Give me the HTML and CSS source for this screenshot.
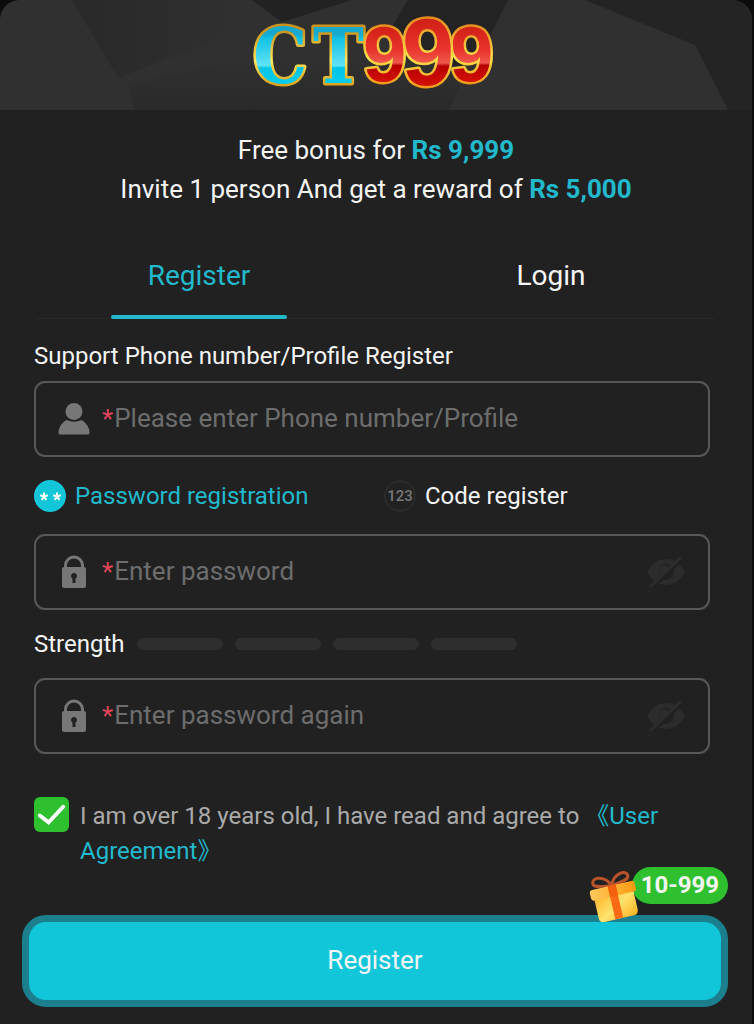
FILE: index.html
```
<!DOCTYPE html>
<html lang="en">
  <head>
    <meta charset="UTF-8">
    <meta name="viewport" content="width=device-width, initial-scale=1">
    <title>CT999 - Register</title>
    <link rel="stylesheet" href="styles.css">
  </head>
  <body>
    <!-- shared icons -->
    <svg class="sprite" aria-hidden="true">
      <symbol id="icon-user" viewBox="0 0 32 34">
        <circle cx="16" cy="9.500" r="8.500" />
        <path d="M0.500 31C0.500 25 4 20.500 8.500 18Q16 21.500 23.500 18C28 20.500 31.500 25 31.500 31Q31.500 32.500 30 32.500H2Q0.500 32.500 0.500 31Z" />
      </symbol>
      <symbol id="icon-lock" viewBox="0 0 32 34">
        <path d="M7.500 15V10.500a8.500 8.500 0 0 1 17 0V15" fill="none" stroke="currentColor" stroke-width="3" />
        <path fill-rule="evenodd" d="M6 12H26Q28 12 28 14V31Q28 33 26 33H6Q4 33 4 31V14Q4 12 6 12ZM16 18a3 3 0 0 0-1.500 5.600V28h3v-4.400A3 3 0 0 0 16 18Z" />
      </symbol>
      <symbol id="icon-eye" viewBox="0 0 40 32">
        <path fill-rule="evenodd" d="M1 16Q8 3 20 3T39 16Q32 29 20 29T1 16ZM20 8a8 8 0 1 0 0 16a8 8 0 1 0 0-16Z" />
        <path d="M14 20a6 6 0 0 1 9-9Z" />
        <path d="M4 31L35 1" fill="none" stroke="currentColor" stroke-width="3" />
        <path d="M7 32L37 3" fill="none" stroke="#212121" stroke-width="2" />
      </symbol>
    </svg>

    <main class="card">
      <header class="banner">
        <svg class="banner-bg" viewBox="0 0 752 110" preserveAspectRatio="none" aria-hidden="true">
          <defs>
            <linearGradient id="shade" x1="0" y1="0" x2="1" y2="0">
              <stop offset="0" stop-color="#292929" />
              <stop offset="1" stop-color="#303030" />
            </linearGradient>
            <linearGradient id="floor" x1="0" y1="1" x2="0" y2="0">
              <stop offset="0" stop-color="#2a2a2a" />
              <stop offset="1" stop-color="#303030" />
            </linearGradient>
          </defs>
          <path fill="url(#floor)" d="M134 110L128 85L240 60H470L450 110Z" />
          <path fill="url(#shade)" d="M72 0L118 78L215 40L240 0Z" />
          <path fill="#222" d="M252 0H352L282 22Z" />
          <path fill="#232323" d="M408 0H508L490 36L460 70L390 30Z" />
          <path fill="#242424" d="M585 0H752V110H728L695 45Z" />
        </svg>
        <svg class="logo" viewBox="0 0 246 80" role="img" aria-label="CT999">
          <defs>
            <linearGradient id="blue" x1="0" y1="0" x2="0" y2="1">
              <stop offset="0.25" stop-color="#16a9cf" />
              <stop offset="0.3" stop-color="#12c2e4" />
              <stop offset="0.6" stop-color="#5fe2f7" />
              <stop offset="0.63" stop-color="#00c4e6" />
              <stop offset="0.85" stop-color="#0cd0ec" />
            </linearGradient>
            <linearGradient id="red" x1="0" y1="0" x2="0" y2="1">
              <stop offset="0.1" stop-color="#c81a10" />
              <stop offset="0.45" stop-color="#e8322a" />
              <stop offset="0.6" stop-color="#f0574c" />
              <stop offset="0.63" stop-color="#b80000" />
              <stop offset="0.85" stop-color="#d81408" />
            </linearGradient>
            <linearGradient id="gold" x1="0" y1="0" x2="0" y2="1">
              <stop offset="0.2" stop-color="#c8921c" />
              <stop offset="0.55" stop-color="#ffe65a" />
              <stop offset="0.85" stop-color="#d89a18" />
            </linearGradient>
            <linearGradient id="orange" x1="0" y1="0" x2="0" y2="1">
              <stop offset="0.1" stop-color="#e07c18" />
              <stop offset="0.55" stop-color="#ffe04a" />
              <stop offset="0.9" stop-color="#f08a10" />
            </linearGradient>
          </defs>
          <g class="logo-letters">
            <text x="0" y="71">C</text>
            <text x="60" y="71">T</text>
          </g>
          <g class="logo-digits">
            <text x="110" y="69">9</text>
            <text x="197" y="69">9</text>
            <text class="big" x="149" y="73">9</text>
          </g>
        </svg>
      </header>

      <section class="promo">
        <p>Free bonus for <strong>Rs 9,999</strong></p>
        <p>Invite 1 person And get a reward of <strong>Rs 5,000</strong></p>
      </section>

      <nav class="tabs">
        <button type="button" class="tab active">Register</button>
        <button type="button" class="tab">Login</button>
      </nav>

      <form class="form">
        <label class="title" for="account">Support Phone number/Profile Register</label>
        <div class="field">
          <svg class="icon"><use href="#icon-user" /></svg>
          <span class="star">*</span>
          <input id="account" type="text" placeholder="Please enter Phone number/Profile">
        </div>

        <div class="modes">
          <button type="button" class="mode active">
            <svg class="mode-icon" viewBox="0 0 32 32" aria-hidden="true">
              <circle cx="16" cy="16" r="16" fill="#12c6da" />
              <path d="M10 16.500V12.500M10 16.500L6.200 15.300M10 16.500L13.800 15.300M10 16.500L7.600 19.800M10 16.500L12.400 19.800M23 16.500V12.500M23 16.500L19.200 15.300M23 16.500L26.800 15.300M23 16.500L20.600 19.800M23 16.500L25.400 19.800" stroke="#fff" stroke-width="2" />
            </svg>
            Password registration
          </button>
          <button type="button" class="mode">
            <span class="mode-icon code">123</span>
            Code register
          </button>
        </div>

        <div class="field">
          <svg class="icon"><use href="#icon-lock" /></svg>
          <span class="star">*</span>
          <input type="password" placeholder="Enter password" aria-label="Enter password">
          <button type="button" class="eye" aria-label="Show password"><svg><use href="#icon-eye" /></svg></button>
        </div>

        <div class="strength">
          <span>Strength</span>
          <i></i><i></i><i></i><i></i>
        </div>

        <div class="field">
          <svg class="icon"><use href="#icon-lock" /></svg>
          <span class="star">*</span>
          <input type="password" placeholder="Enter password again" aria-label="Enter password again">
          <button type="button" class="eye" aria-label="Show password"><svg><use href="#icon-eye" /></svg></button>
        </div>

        <div class="agree">
          <span class="check">
            <input id="agree" type="checkbox" checked>
            <svg viewBox="0 0 36 36" aria-hidden="true"><path d="M6 19L15 26L30 10" /></svg>
          </span>
          <p><label for="agree">I am over 18 years old, I have read and agree to</label> <a href="#">《User Agreement》</a></p>
        </div>

        <div class="submit-wrap">
          <button type="submit" class="submit">Register</button>
          <div class="bonus">
            <svg class="gift" viewBox="0 0 52 54" aria-hidden="true">
              <defs>
                <linearGradient id="box" x1="0" y1="0" x2="1" y2="1">
                  <stop offset="0" stop-color="#ffb52a" />
                  <stop offset="0.5" stop-color="#ffe36e" />
                  <stop offset="1" stop-color="#ffb01e" />
                </linearGradient>
                <linearGradient id="lid" x1="0" y1="0" x2="1" y2="0">
                  <stop offset="0" stop-color="#ffc95a" />
                  <stop offset="1" stop-color="#ff9a12" />
                </linearGradient>
              </defs>
              <g transform="rotate(-13 26 30)">
                <path d="M26 15C21 3 8 3 8 9C8 14 18 14 26 15C34 14 44 14 44 9C44 3 31 3 26 15Z" fill="none" stroke="#b9532c" stroke-width="3" />
                <path d="M6 24H46V44Q46 49 41 49H11Q6 49 6 44Z" fill="url(#box)" />
                <rect x="3" y="15" width="46" height="11" rx="3" fill="url(#lid)" />
                <path d="M22 15H30V49H22Z" fill="#ff6a14" />
                <path d="M22 15H30V26H22Z" fill="#f2600e" />
              </g>
            </svg>
            <span class="bonus-text">10-999</span>
          </div>
        </div>
      </form>
    </main>

    <script>
      // switch the active tab / mode
      document.querySelectorAll(".tabs, .modes").forEach(function (group) {
        group.addEventListener("click", function (e) {
          let button = e.target.closest("button");
          if (!button) return;
          group.querySelector(".active").classList.remove("active");
          button.classList.add("active");
        });
      });

      // show or hide the password
      document.querySelectorAll(".eye").forEach(function (eye) {
        eye.addEventListener("click", function () {
          let input = eye.parentElement.querySelector("input");
          input.type = input.type === "password" ? "text" : "password";
        });
      });
    </script>
  </body>
</html>
```
FILE: styles.css
```
* {
  box-sizing: border-box;
}

body {
  margin: 0;
  background-color: #0c0c0c;
  color: #f5f5f5;
  font-family: Roboto, "Noto Sans CJK SC", sans-serif;
  font-size: 24px;
}

p {
  margin: 0;
}

button,
input {
  font: inherit;
  color: inherit;
  padding: 0;
  border: none;
  background: none;
}

button {
  cursor: pointer;
}

.sprite {
  display: none;
}

.card {
  min-height: 100vh;
  margin-right: 2px;
  background-color: #212121;
  border-radius: 20px 20px 0 0;
  overflow: hidden;
}

/* header with the logo */
.banner {
  position: relative;
  height: 110px;
  padding-top: 12px;
  background-color: #303030;
  text-align: center;
}

.banner-bg {
  position: absolute;
  top: 0;
  left: 0;
  width: 100%;
  height: 100%;
}

.logo {
  position: relative;
  width: 246px;
  height: 80px;
  overflow: visible;
}

.logo text {
  stroke-width: 5px;
  stroke-linejoin: round;
  paint-order: stroke;
  font-weight: bold;
}

.logo-letters text {
  fill: url(#blue);
  stroke: url(#gold);
  font-family: "DejaVu Serif Condensed", "DejaVu Serif", serif;
  font-size: 76px;
}

.logo-digits text {
  fill: url(#red);
  stroke: url(#orange);
  font-family: "Liberation Sans", sans-serif;
  font-size: 78px;
}

.logo-digits .big {
  font-size: 94px;
}

.promo {
  padding-top: 21px;
  font-size: 26px;
  line-height: 39px;
  text-align: center;
}

.promo strong {
  color: #22b9cc;
}

/* tabs */
.tabs {
  display: flex;
  margin: 31px 25px 0 23px;
  background: linear-gradient(#282828, #282828) 12px 78px / calc(100% - 24px) 1px no-repeat;
}

.tab {
  position: relative;
  flex: 1;
  height: 80px;
  padding-bottom: 10px;
  font-size: 28px;
}

.tab.active {
  color: #22b9cc;
}

.tab.active::after {
  content: "";
  position: absolute;
  bottom: 1px;
  left: 25%;
  width: 50%;
  height: 4px;
  border-radius: 2px;
  background-color: #22b9cc;
}

/* form */
.form {
  padding: 20px 42px 16px 34px;
}

.title {
  display: block;
  line-height: 32px;
}

.field {
  display: flex;
  align-items: center;
  height: 76px;
  padding: 0 22px;
  border: 2px solid #585858;
  border-radius: 11px;
  font-size: 26px;
}

.title + .field {
  margin-top: 9px;
}

.icon {
  width: 32px;
  height: 34px;
  margin-right: 12px;
  fill: #777;
  color: #777;
}

.star {
  margin-right: 1px;
  color: #e0455a;
}

.field input {
  flex: 1;
  min-width: 0;
  padding-bottom: 2px;
  outline: none;
}

.field input::placeholder {
  color: #6d6d6d;
  opacity: 1;
}

.eye {
  height: 32px;
  color: #2c2c2c;
  fill: #2c2c2c;
}

.eye svg {
  display: block;
  width: 40px;
  height: 32px;
}

.modes {
  display: flex;
  align-items: center;
  height: 77px;
}

.mode {
  display: flex;
  flex: none;
  align-items: center;
  gap: 9px;
  white-space: nowrap;
}

.mode:first-child {
  width: 350px;
}

.mode.active {
  color: #22b9cc;
}

.mode-icon {
  width: 32px;
  height: 32px;
}

.code {
  border: 2px solid #2b2b2b;
  border-radius: 50%;
  color: #777;
  font-size: 15px;
  font-weight: 500;
  line-height: 28px;
}

.strength {
  display: flex;
  align-items: center;
  gap: 12px;
  height: 68px;
}

.strength i {
  width: 86px;
  height: 12px;
  border-radius: 6px;
  background-color: #2e2e2e;
}

.agree {
  display: flex;
  gap: 11px;
  margin-top: 43px;
  color: #aaa;
  line-height: 35px;
}

.agree p {
  padding-top: 2px;
}

.agree a {
  color: #22b9cc;
  text-decoration: none;
}

.check {
  position: relative;
  flex: none;
  width: 35px;
  height: 35px;
}

.check input {
  appearance: none;
  display: block;
  width: 35px;
  height: 35px;
  margin: 0;
  border-radius: 6px;
  background-color: #444;
}

.check input:checked {
  background-color: #2fc02f;
}

.check svg {
  position: absolute;
  inset: 0;
  fill: none;
  stroke: #fff;
  stroke-width: 4;
  stroke-linecap: round;
  pointer-events: none;
}

.check input:not(:checked) + svg {
  display: none;
}

/* submit button */
.submit-wrap {
  position: relative;
  margin: 46px -18px 0 -12px;
}

.submit {
  width: 100%;
  height: 92px;
  padding-bottom: 2px;
  border: 7px solid #1b7f8d;
  border-radius: 24px;
  background-color: #12c6da;
  font-size: 26px;
}

/* bonus badge over the corner of the button */
.bonus {
  position: absolute;
  top: -48px;
  right: 0;
  display: flex;
}

.bonus-text {
  height: 37px;
  padding: 0 9px;
  border-radius: 19px;
  background-color: #2fc02f;
  font-size: 24px;
  font-weight: bold;
  line-height: 37px;
}

.gift {
  position: relative;
  z-index: 1;
  width: 52px;
  height: 54px;
  margin: 3px -9px 0 0;
}
```
